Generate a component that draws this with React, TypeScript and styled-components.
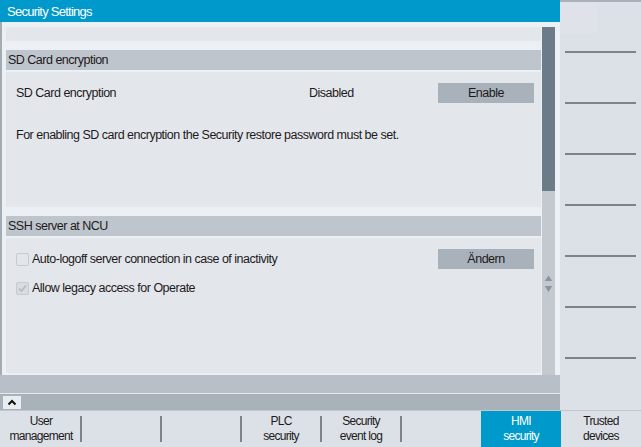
import React from 'react';
import styled, { createGlobalStyle } from 'styled-components';

const GlobalStyle = createGlobalStyle`
  html, body { margin: 0; padding: 0; background: #dce1e8; }
  * { box-sizing: border-box; }
`;

const FONT = `"Liberation Sans", Arial, sans-serif`;

const Screen = styled.div`
  width: 641px;
  height: 447px;
  display: grid;
  grid-template-columns: 560px 81px;
  grid-template-rows: 410px 37px;
  overflow: hidden;
  font-family: ${FONT};
  font-size: 12.5px;
  letter-spacing: -0.5px;
  color: #1e1a1b;
`;

const MainPane = styled.div`
  display: flex;
  flex-direction: column;
  background: #eceff4;
  min-height: 0;
`;

const TitleBar = styled.div`
  height: 22px;
  flex: none;
  background: #0099cb;
  color: #ffffff;
  font-size: 13px;
  letter-spacing: -0.75px;
  padding-left: 7px;
  display: flex;
  align-items: center;
`;

const ContentArea = styled.div`
  flex: 1;
  display: flex;
  align-items: flex-start;
  gap: 1px;
  border-left: 2px solid #a3abb3;
  padding: 5px 5px 0 4px;
  min-height: 0;
`;

const Viewport = styled.div`
  width: 535px;
  height: 346px;
  display: flex;
  flex-direction: column;
  overflow: hidden;
`;

const TopStrip = styled.div`
  height: 14px;
  flex: none;
  background: #e3e7ec;
`;

const Section = styled.div`
  margin-top: 9px;
  display: flex;
  flex-direction: column;
  flex: none;
`;

const SectionHeader = styled.div`
  height: 20px;
  background: #bec5cc;
  padding-left: 2px;
  display: flex;
  align-items: center;
`;

const SectionBody = styled.div`
  margin-top: 2px;
  height: 135px;
  background: #e3e7ec;
  padding: 11px 7px 0 10px;
  display: flex;
  flex-direction: column;
`;

const Row = styled.div<{ $gap?: number }>`
  height: 20px;
  margin-top: ${(p) => p.$gap ?? 0}px;
  display: flex;
  align-items: center;
`;

const Label = styled.div`
  width: 293px;
  white-space: nowrap;
`;

const Value = styled.div`
  flex: 1;
  white-space: nowrap;
`;

const Spacer = styled.div`
  flex: 1;
`;

const ActionButton = styled.div`
  width: 96px;
  height: 20px;
  background: #a9b2ba;
  display: flex;
  align-items: center;
  justify-content: center;
`;

const Paragraph = styled.div<{ $gap?: number }>`
  margin-top: ${(p) => p.$gap ?? 0}px;
  line-height: 20px;
  white-space: nowrap;
`;

const CheckBox = styled.div<{ $checked?: boolean }>`
  width: 13px;
  height: 13px;
  flex: none;
  border: 1px solid #c6cbd1;
  border-radius: 2px;
  background: ${(p) => (p.$checked ? '#d9dde2' : '#e3e7ec')};
  margin-right: 3px;
  display: flex;
  align-items: center;
  justify-content: center;
`;

const CheckLabel = styled.div`
  white-space: nowrap;
`;

const ScrollBar = styled.div`
  width: 13px;
  align-self: stretch;
  background: #c4c9d0;
  display: flex;
  flex-direction: column;
`;

const ScrollThumb = styled.div`
  height: 164px;
  background: #6b7b87;
`;

const ScrollArrows = styled.div`
  margin-top: 84px;
  display: flex;
  justify-content: center;
`;

const HBar = styled.div`
  height: 18px;
  flex: none;
  background: #b8bfc6;
`;

const HDivider = styled.div`
  height: 1px;
  flex: none;
  background: #e6e9ee;
`;

const Toolbar = styled.div`
  height: 16px;
  flex: none;
  background: #a9b1b9;
  padding: 2px 0 1px 3px;
  display: flex;
`;

const ExpandButton = styled.div`
  width: 18px;
  height: 13px;
  background: #e9ecf0;
  display: flex;
  align-items: center;
  justify-content: center;
`;

const SoftKeyPanel = styled.div`
  background: #dce1e8;
  border-top: 2px solid #a8b0b8;
  display: flex;
  flex-direction: column;
`;

const SoftKey = styled.div`
  height: 51px;
  padding: 0 5px;
  display: flex;
  align-items: flex-end;
  position: relative;
`;

const SoftKeyLine = styled.div<{ $last?: boolean }>`
  width: 100%;
  height: 2px;
  position: relative;
  background: ${(p) => (p.$last ? 'transparent' : '#7d8387')};
`;

const SoftKeyHighlight = styled.div`
  position: absolute;
  left: 0;
  top: 0;
  width: 37px;
  height: 31px;
  background: #dfe3e9;
`;

const BottomBar = styled.div`
  grid-column: 1 / span 2;
  background: #dce1e8;
  border-top: 1px solid #c2c8ce;
  display: flex;
  padding-left: 1px;
`;

const BottomKey = styled.div<{ $active?: boolean; $sep?: boolean }>`
  width: 80px;
  height: 100%;
  position: relative;
  background: ${(p) => (p.$active ? '#0099cb' : 'transparent')};
  color: ${(p) => (p.$active ? '#ffffff' : '#1e1a1b')};
  font-size: 12px;
  letter-spacing: -0.7px;
  display: flex;
  flex-direction: column;
  align-items: center;
  justify-content: center;
  line-height: 15px;
  text-align: center;
  &::before {
    content: '';
    display: ${(p) => (p.$sep ? 'block' : 'none')};
    position: absolute;
    left: -1px;
    top: 5px;
    bottom: 5px;
    width: 2px;
    background: #7d8387;
  }
`;

const bottomKeys: { lines: string[]; active?: boolean }[] = [
  { lines: ['User', 'management'] },
  { lines: [] },
  { lines: [] },
  { lines: ['PLC', 'security'] },
  { lines: ['Security', 'event log'] },
  { lines: [] },
  { lines: ['HMI', 'security'], active: true },
  { lines: ['Trusted', 'devices'] },
];

export default function App() {
  return (
    <>
      <GlobalStyle />
      <Screen>
        <MainPane>
          <TitleBar>Security Settings</TitleBar>
          <ContentArea>
            <Viewport>
              <TopStrip />
              <Section>
                <SectionHeader>SD Card encryption</SectionHeader>
                <SectionBody>
                  <Row>
                    <Label>SD Card encryption</Label>
                    <Value>Disabled</Value>
                    <ActionButton>Enable</ActionButton>
                  </Row>
                  <Paragraph $gap={22}>
                    For enabling SD card encryption the Security restore password must be set.
                  </Paragraph>
                </SectionBody>
              </Section>
              <Section>
                <SectionHeader>SSH server at NCU</SectionHeader>
                <SectionBody>
                  <Row>
                    <CheckBox />
                    <CheckLabel>Auto-logoff server connection in case of inactivity</CheckLabel>
                    <Spacer />
                    <ActionButton>Ändern</ActionButton>
                  </Row>
                  <Row $gap={9}>
                    <CheckBox $checked>
                      <svg width="11" height="11" viewBox="0 0 11 11">
                        <polyline points="2,5.5 4.5,8 9,2.5" fill="none" stroke="#b3bac1" strokeWidth="1.6" />
                      </svg>
                    </CheckBox>
                    <CheckLabel>Allow legacy access for Operate</CheckLabel>
                  </Row>
                </SectionBody>
              </Section>
            </Viewport>
            <ScrollBar>
              <ScrollThumb />
              <ScrollArrows>
                <svg width="13" height="18" viewBox="0 0 13 18">
                  <polygon points="2.8,6 6.5,0.5 10.2,6" fill="#8894a0" />
                  <polygon points="2.8,11 10.2,11 6.5,17" fill="#8894a0" />
                </svg>
              </ScrollArrows>
            </ScrollBar>
          </ContentArea>
          <HBar />
          <HDivider />
          <Toolbar>
            <ExpandButton>
              <svg width="10" height="7" viewBox="0 0 10 7">
                <polyline points="1.5,5.5 5,2 8.5,5.5" fill="none" stroke="#111" strokeWidth="2" />
              </svg>
            </ExpandButton>
          </Toolbar>
        </MainPane>
        <SoftKeyPanel>
          {Array.from({ length: 8 }).map((_, i) => (
            <SoftKey key={i}>
              {i === 0 && <SoftKeyHighlight />}
              <SoftKeyLine $last={i === 7} />
            </SoftKey>
          ))}
        </SoftKeyPanel>
        <BottomBar>
          {bottomKeys.map((k, i) => {
            const prev = bottomKeys[i - 1];
            const sep = i > 0 && !k.active && !(prev && prev.active);
            return (
              <BottomKey key={i} $active={k.active} $sep={sep}>
                {k.lines.map((l) => (
                  <span key={l}>{l}</span>
                ))}
              </BottomKey>
            );
          })}
        </BottomBar>
      </Screen>
    </>
  );
}
